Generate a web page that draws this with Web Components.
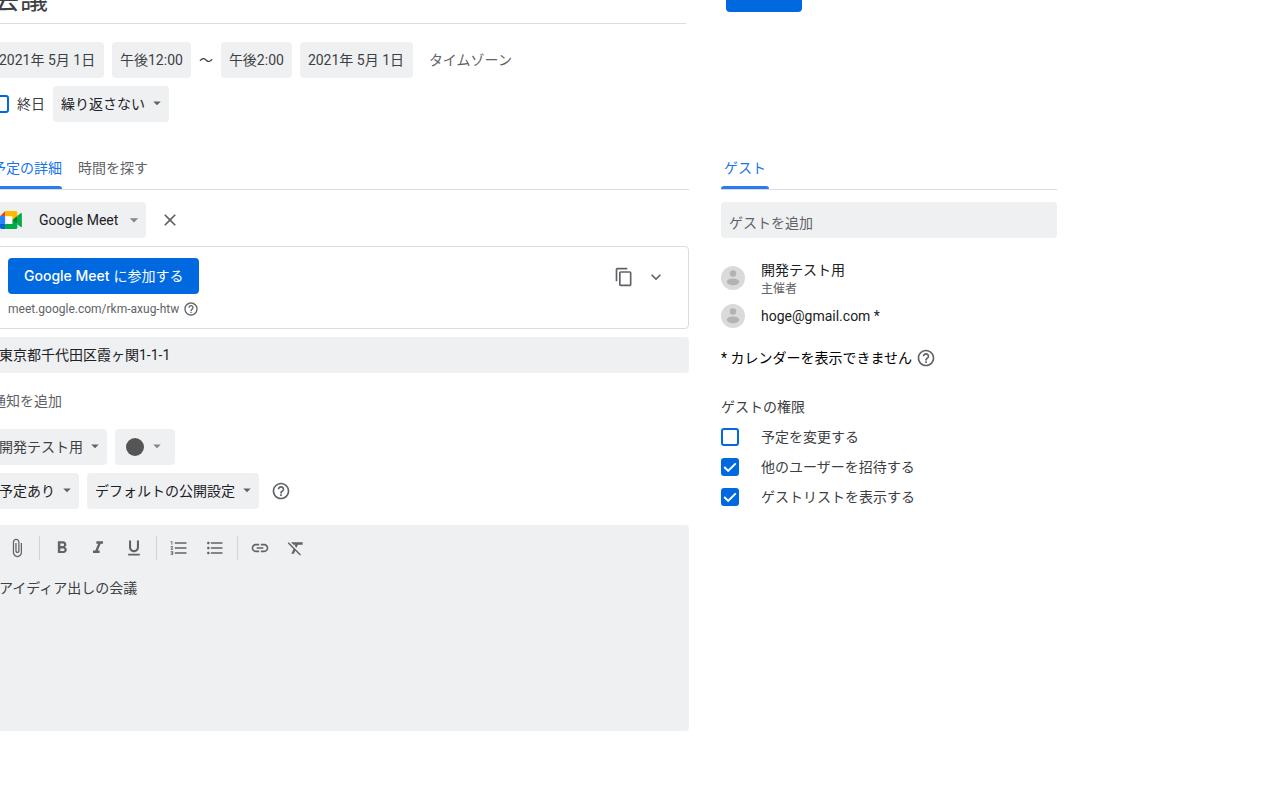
<!DOCTYPE html>
<html lang="ja">
<head>
<meta charset="utf-8">
<meta name="viewport" content="width=device-width, initial-scale=1">
<title>会議</title>
<style>
  html, body { margin: 0; background: #fff; overflow-x: hidden; }
  body {
    font: 14px/20px Roboto, "Noto Sans CJK JP", sans-serif;
    color: #3c4043;
    --blue: #0069e0;
    --tab: #1a73e8;
    --fill: #eff0f2;
    --line: #dadce0;
    --muted: #5f6368;
    --ink: #202124;
  }
</style>
</head>
<body>
<event-editor></event-editor>
<script>
const RESET = `*{box-sizing:border-box}button,input,select,textarea{font:inherit;color:inherit;margin:0;border:0;background:none;border-radius:0}button{cursor:pointer}`;

function define(name, css, html, setup) {
  const tpl = document.createElement('template');
  tpl.innerHTML = `<style>${RESET}${css}</style>${html}`;
  customElements.define(name, class extends HTMLElement {
    constructor() {
      super();
      this.attachShadow({ mode: 'open' }).append(tpl.content.cloneNode(true));
    }
    connectedCallback() {
      if (setup && !this.ready) { this.ready = true; setup(this, this.shadowRoot); }
    }
  });
}

const ICONS = {
  attach: 'M16.5 6v11.5c0 2.21-1.79 4-4 4s-4-1.79-4-4V5c0-1.38 1.12-2.5 2.5-2.5s2.5 1.12 2.5 2.5v10.5c0 .55-.45 1-1 1s-1-.45-1-1V6H10v9.5c0 1.38 1.12 2.5 2.5 2.5s2.5-1.12 2.5-2.5V5c0-2.21-1.79-4-4-4S7 2.79 7 5v12.5c0 3.04 2.46 5.5 5.5 5.5s5.5-2.46 5.5-5.5V6h-1.5z',
  bold: 'M15.6 10.79c.97-.67 1.65-1.77 1.65-2.79 0-2.26-1.75-4-4-4H7v14h7.04c2.09 0 3.71-1.7 3.71-3.79 0-1.52-.86-2.82-2.15-3.42zM10 6.5h3c.83 0 1.5.67 1.5 1.5s-.67 1.5-1.5 1.5h-3v-3zm3.5 9H10v-3h3.5c.83 0 1.5.67 1.5 1.5s-.67 1.5-1.5 1.5z',
  italic: 'M10 4v3h2.21l-3.42 8H6v3h8v-3h-2.21l3.42-8H18V4z',
  underline: 'M12 17c3.31 0 6-2.69 6-6V3h-2.5v8c0 1.93-1.57 3.5-3.5 3.5S8.5 12.93 8.5 11V3H6v8c0 3.31 2.69 6 6 6zm-7 2v2h14v-2H5z',
  numbered: 'M2 17h2v.5H3v1h1v.5H2v1h3v-4H2v1zm1-9h1V4H2v1h1v3zm-1 3h1.8L2 13.1v.9h3v-1H3.2L5 10.9V10H2v1zm5-6v2h14V5H7zm0 14h14v-2H7v2zm0-6h14v-2H7v2z',
  bulleted: 'M4 10.5c-.83 0-1.5.67-1.5 1.5s.67 1.5 1.5 1.5 1.5-.67 1.5-1.5-.67-1.5-1.5-1.5zm0-6c-.83 0-1.5.67-1.5 1.5S3.17 7.5 4 7.5 5.5 6.83 5.5 6 4.83 4.5 4 4.5zm0 12c-.83 0-1.5.68-1.5 1.5s.68 1.5 1.5 1.5 1.5-.68 1.5-1.5-.67-1.5-1.5-1.5zM7 19h14v-2H7v2zm0-6h14v-2H7v2zm0-8v2h14V5H7z',
  link: 'M3.9 12c0-1.71 1.39-3.1 3.1-3.1h4V7H7c-2.76 0-5 2.24-5 5s2.24 5 5 5h4v-1.9H7c-1.71 0-3.1-1.39-3.1-3.1zM8 13h8v-2H8v2zm9-6h-4v1.9h4c1.71 0 3.1 1.39 3.1 3.1s-1.39 3.1-3.1 3.1h-4V17h4c2.76 0 5-2.24 5-5s-2.24-5-5-5z',
  clear: 'M3.27 5L2 6.27l6.97 6.97L6.5 19h3l1.57-3.66L16.73 21 18 19.73 3.55 5.27 3.27 5zM6 5v.18L8.82 8h2.4l-.72 1.68 2.1 2.1L14.21 8H20V5H6z',
  help: 'M11 18h2v-2h-2v2zm1-16C6.48 2 2 6.48 2 12s4.48 10 10 10 10-4.48 10-10S17.52 2 12 2zm0 18c-4.41 0-8-3.59-8-8s3.59-8 8-8 8 3.59 8 8-3.59 8-8 8zm0-14c-2.21 0-4 1.79-4 4h2c0-1.1.9-2 2-2s2 .9 2 2c0 2-3 1.75-3 5h2c0-2.25 3-2.5 3-5 0-2.21-1.79-4-4-4z',
  copy: 'M16 1H4c-1.1 0-2 .9-2 2v14h2V3h12V1zm3 4H8c-1.1 0-2 .9-2 2v14c0 1.1.9 2 2 2h11c1.1 0 2-.9 2-2V7c0-1.1-.9-2-2-2zm0 16H8V7h11v14z',
  chevron: 'M16.59 8.59L12 13.17 7.41 8.59 6 10l6 6 6-6z',
  close: 'M19 6.41L17.59 5 12 10.59 6.41 5 5 6.41 10.59 12 5 17.59 6.41 19 12 13.41 17.59 19 19 17.59 13.41 12z',
  arrow: 'M7 10l5 5 5-5z'
};

define('cal-icon', `:host{display:block;flex:none;width:20px;height:20px}svg{display:block;width:100%;height:100%;fill:currentColor}`,
  `<svg viewBox="0 0 24 24" aria-hidden="true"><path/></svg>`,
  (el, root) => root.querySelector('path').setAttribute('d', ICONS[el.getAttribute('name')]));

define('icon-button', `:host{display:block;flex:none;color:var(--muted)}button{display:grid;place-items:center;width:var(--w,32px);height:var(--h,32px);padding:0}`,
  `<button type="button"><cal-icon></cal-icon></button>`,
  (el, root) => {
    root.querySelector('button').setAttribute('aria-label', el.getAttribute('label'));
    const old = root.querySelector('cal-icon');
    const icon = document.createElement('cal-icon');
    icon.setAttribute('name', el.getAttribute('name'));
    if (el.hasAttribute('small')) icon.style.width = icon.style.height = '16px';
    old.replaceWith(icon);
  });

define('cal-chip', `:host{display:block;flex:none}button{display:flex;align-items:center;height:36px;min-width:var(--min,0);padding:0 8px;background:var(--fill);border-radius:4px;white-space:nowrap}`,
  `<button type="button"><slot></slot></button>`);

define('cal-select', `:host{display:grid;flex:none;color:var(--ink)}
  select{grid-area:1/1;appearance:none;height:36px;padding:0 24px 0 8px;background:var(--fill);border-radius:4px}
  cal-icon{grid-area:1/1;justify-self:end;align-self:center;width:18px;height:18px;margin:0 3px 2px 0;color:var(--muted);pointer-events:none}`,
  `<select><option></option></select><cal-icon name="arrow"></cal-icon>`,
  (el, root) => {
    root.querySelector('option').textContent = el.getAttribute('value');
    root.querySelector('select').setAttribute('aria-label', el.getAttribute('label'));
  });

define('cal-checkbox', `:host{display:block}
  label{display:flex;align-items:center;gap:var(--gap,8px);height:var(--row,30px)}
  input{appearance:none;flex:none;display:grid;place-items:center;width:18px;height:18px;border:2px solid var(--blue);border-radius:3px}
  input:checked{background:var(--blue)}
  input:checked::before{content:"";width:14px;height:14px;background:#fff;clip-path:polygon(4% 55%,14% 45%,37% 68%,86% 19%,96% 29%,37% 88%)}`,
  `<label><input type="checkbox"><slot></slot></label>`,
  (el, root) => { root.querySelector('input').checked = el.hasAttribute('checked'); });

define('cal-tabs', `:host{display:flex;border-bottom:1px solid var(--line);height:44px;gap:var(--tab-gap,16px)}`,
  `<slot></slot>`, el => el.setAttribute('role', 'tablist'));

define('cal-tab', `:host{display:block;color:var(--muted)}
  button{position:relative;height:100%;padding:0 var(--tab-pad,0)}
  :host([selected]) button{color:var(--tab)}
  :host([selected]) button::after{content:"";position:absolute;left:0;right:0;bottom:0;height:3px;background:#2b7bf0;border-radius:3px 3px 0 0}`,
  `<button type="button" role="tab"><slot></slot></button>`,
  (el, root) => root.querySelector('button').setAttribute('aria-selected', el.hasAttribute('selected')));

define('primary-button', `:host{display:block;width:max-content}
  button{display:block;height:36px;padding:var(--button-pad,0 16px);min-width:76px;background:var(--blue);color:#fff;border-radius:4px;font-family:Inter,"Noto Sans CJK JP",sans-serif}`,
  `<button type="button"><slot></slot></button>`);

define('meet-logo', `:host{display:block;flex:none;width:22px;height:18px}svg{display:block;width:100%;height:100%}`,
  `<svg viewBox="0 0 88 72" aria-hidden="true"><path fill="#fff" d="M20 20h30v32H20z"/><path fill="#00832d" d="M49.5 36l8.53 9.75 11.47 7.33 2-17.02-2-16.64-11.69 6.44z"/><path fill="#0066da" d="M0 51.5V66c0 3.315 2.685 6 6 6h14.5l3-10.96-3-9.54-9.95-3z"/><path fill="#e94235" d="M20.5 0L0 20.5l10.55 3 9.95-3 2.95-9.41z"/><path fill="#2684fc" d="M20.5 20.5H0v31h20.5z"/><path fill="#00ac47" d="M82.6 8.68L69.5 19.42v33.66l13.16 10.79c1.97 1.54 4.85.135 4.85-2.37V11c0-2.535-2.945-3.925-4.91-2.32zM49.5 36v15.5h-29V72h43c3.315 0 6-2.685 6-6V53.08z"/><path fill="#ffba00" d="M63.5 0h-43v20.5h29V36l20-16.57V6c0-3.315-2.685-6-6-6z"/></svg>`);

define('meet-card', `:host{display:flex;border:1px solid var(--line);border-radius:4px;height:83px;padding:11px 16px}
  .info{flex:1;min-width:0}
  .brand{font-weight:500}
  .url{display:flex;align-items:center;gap:4px;height:30px;font-size:12px;color:var(--muted)}
  .url a{color:inherit;text-decoration:none}
  .url icon-button{--w:16px;--h:16px}
  .tools{display:flex;height:38px;align-items:center}`,
  `<div class="info"><primary-button><span class="brand">Google Meet</span> に参加する</primary-button>
    <div class="url"><a href="#meet">meet.google.com/rkm-axug-htw</a><icon-button name="help" label="ヘルプ" small></icon-button></div></div>
   <div class="tools"><icon-button name="copy" label="コピー"></icon-button><icon-button name="chevron" label="詳細"></icon-button></div>`);

define('rich-editor', `:host{display:block;background:var(--fill);border-radius:4px}
  .bar{display:flex;align-items:center;height:46px;padding:0 8px;--w:36px;--h:36px}
  .bar icon-button{color:#606468}
  i{width:1px;height:24px;margin:0 4px;background:#d0d3d7}
  textarea{display:block;width:100%;height:160px;padding:7px 8px;resize:none;outline:0;color:#3c4043}`,
  `<div class="bar" role="toolbar" aria-label="書式">
    <icon-button name="attach" label="添付"></icon-button><i></i>
    <icon-button name="bold" label="太字"></icon-button><icon-button name="italic" label="斜体"></icon-button><icon-button name="underline" label="下線"></icon-button><i></i>
    <icon-button name="numbered" label="番号付きリスト"></icon-button><icon-button name="bulleted" label="箇条書き"></icon-button><i></i>
    <icon-button name="link" label="リンク"></icon-button><icon-button name="clear" label="書式をクリア"></icon-button>
  </div><textarea aria-label="説明">アイディア出しの会議</textarea>`);

define('guest-row', `:host{display:flex;align-items:center;gap:16px;line-height:22px;color:var(--ink)}
  svg{flex:none;width:24px;height:24px}
  .text{display:flex;flex-direction:column}
  ::slotted([slot=role]){font-size:12px;line-height:16px;color:var(--muted)}`,
  `<svg viewBox="0 0 24 24" aria-hidden="true"><circle cx="12" cy="12" r="12" fill="#dadada"/><circle cx="12" cy="7.500" r="3.200" fill="#b3b3b3"/><ellipse cx="12" cy="15.800" rx="6.300" ry="3.400" fill="#b3b3b3"/></svg>
   <div class="text"><slot></slot><slot name="role"></slot></div>`);

define('event-details', `:host{display:block;min-width:0}
  .row{display:flex;align-items:center;gap:8px}
  .dates{margin-top:18px}
  .date{--min:113px}
  .second{margin-top:8px}
  .second cal-checkbox{--gap:8px}
  a{color:var(--muted);text-decoration:none}
  .zone{margin-left:8px}
  cal-tabs{margin-top:24px;padding-left:1px}
  .meet{margin-top:12px}
  .meet cal-chip{color:var(--ink)}
  .logo{display:flex;align-items:center;gap:17px;padding-left:1px}
  .logo cal-icon{color:#80868b;margin:0 -6px 0 -11px}
  meet-card{margin-top:8px}
  .place{display:block;width:100%;height:36px;margin-top:8px;padding:0 8px 2px;background:var(--fill);border-radius:4px;color:var(--ink);outline:0}
  .notify{height:56px;padding-left:1px}
  .owner cal-select{color:#3c4043}
  .dot{width:18px;height:18px;margin:0 3px;border-radius:50%;background:#555}
  .swatch{color:#80868b}
  .swatch cal-icon{width:18px;height:18px;margin:0 1px 2px 1px}
  .vis{margin-top:8px;--w:28px}
  rich-editor{margin-top:16px}`,
  `<div class="row dates"><cal-chip class="date">2021年 5月 1日</cal-chip><cal-chip>午後12:00</cal-chip><span>～</span><cal-chip>午後2:00</cal-chip><cal-chip class="date">2021年 5月 1日</cal-chip><a class="zone" href="#timezone">タイムゾーン</a></div>
   <div class="row second"><cal-checkbox>終日</cal-checkbox><cal-select value="繰り返さない" label="繰り返し"></cal-select></div>
   <cal-tabs><cal-tab selected>予定の詳細</cal-tab><cal-tab>時間を探す</cal-tab></cal-tabs>
   <div class="row meet"><cal-chip><span class="logo"><meet-logo></meet-logo><span>Google Meet</span><cal-icon name="arrow"></cal-icon></span></cal-chip><icon-button name="close" label="会議を削除"></icon-button></div>
   <meet-card></meet-card>
   <input class="place" type="text" aria-label="場所" value="東京都千代田区霞ヶ関1-1-1">
   <div class="row notify"><a href="#notify">通知を追加</a></div>
   <div class="row owner"><cal-select value="開発テスト用" label="カレンダー"></cal-select><cal-chip class="swatch"><span class="dot"></span><cal-icon name="arrow"></cal-icon></cal-chip></div>
   <div class="row vis"><cal-select value="予定あり" label="予定の状態"></cal-select><cal-select value="デフォルトの公開設定" label="公開設定"></cal-select><icon-button name="help" label="ヘルプ"></icon-button></div>
   <rich-editor></rich-editor>`);

define('guest-panel', `:host{display:block;min-width:0}
  cal-tabs{--tab-pad:3px}
  .add{display:block;width:100%;height:36px;margin-top:12px;padding:5px 8px 0;background:var(--fill);border-radius:4px;outline:0}
  .add::placeholder{color:var(--muted);opacity:1}
  .guests{display:flex;flex-direction:column;gap:7px;margin-top:21px}
  .note{display:flex;align-items:center;margin-top:14px;color:#000;--w:28px}
  h2{margin:23px 0 5px;font:inherit}
  cal-checkbox{--gap:22px}`,
  `<cal-tabs><cal-tab selected>ゲスト</cal-tab></cal-tabs>
   <input class="add" type="text" aria-label="ゲストを追加" placeholder="ゲストを追加">
   <div class="guests"><guest-row>開発テスト用<span slot="role">主催者</span></guest-row><guest-row>hoge@gmail.com *</guest-row></div>
   <div class="note"><span>* カレンダーを表示できません</span><icon-button name="help" label="ヘルプ"></icon-button></div>
   <h2>ゲストの権限</h2>
   <cal-checkbox>予定を変更する</cal-checkbox><cal-checkbox checked>他のユーザーを招待する</cal-checkbox><cal-checkbox checked>ゲストリストを表示する</cal-checkbox>`);

/* The form sits slightly scrolled, so its top and left edges run past the window. */
define('event-editor', `:host{display:block;margin:-24px 0 0 -9px;padding-bottom:24px}
  header,main{max-width:1066px}
  header{display:grid;grid-template-columns:minmax(0,1fr) 331px;gap:40px}
  header primary-button{--button-pad:0 16px 12px}
  .title{width:100%;height:48px;padding:0 1px 6px;border-bottom:1px solid var(--line);font-size:28px;outline:0}
  main{display:grid;grid-template-columns:minmax(0,1fr) 336px;gap:32px}
  guest-panel{margin-top:122px}`,
  `<header><input class="title" type="text" aria-label="タイトル" value="会議"><primary-button>保存</primary-button></header>
   <main><event-details></event-details><guest-panel></guest-panel></main>`);
</script>
</body>
</html>
